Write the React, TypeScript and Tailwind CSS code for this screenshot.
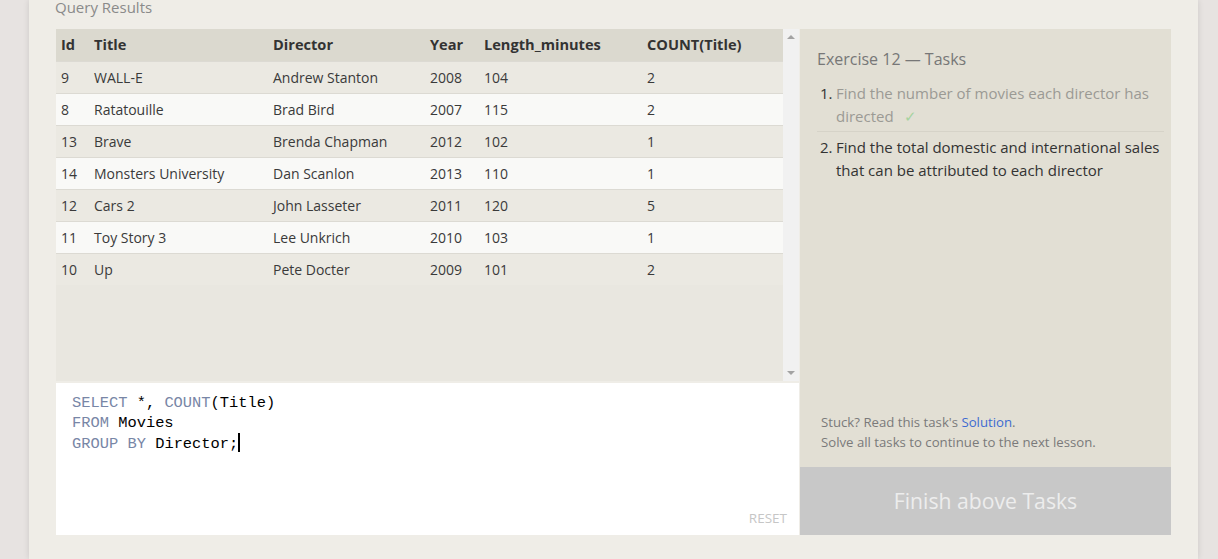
import React from 'react';

type Movie = {
  id: number;
  title: string;
  director: string;
  year: number;
  length: number;
  count: number;
};

const movies: Movie[] = [
  { id: 9, title: 'WALL-E', director: 'Andrew Stanton', year: 2008, length: 104, count: 2 },
  { id: 8, title: 'Ratatouille', director: 'Brad Bird', year: 2007, length: 115, count: 2 },
  { id: 13, title: 'Brave', director: 'Brenda Chapman', year: 2012, length: 102, count: 1 },
  { id: 14, title: 'Monsters University', director: 'Dan Scanlon', year: 2013, length: 110, count: 1 },
  { id: 12, title: 'Cars 2', director: 'John Lasseter', year: 2011, length: 120, count: 5 },
  { id: 11, title: 'Toy Story 3', director: 'Lee Unkrich', year: 2010, length: 103, count: 1 },
  { id: 10, title: 'Up', director: 'Pete Docter', year: 2009, length: 101, count: 2 },
];

const cols = 'grid grid-cols-[38px_179px_157px_54px_163px_1fr] items-center';

function ResultsTable() {
  return (
    <div className="flex h-[352px]">
      <div className="flex-1 bg-[#e9e7e0]">
        <div className={`${cols} h-[32px] bg-[#dbd9cf] font-bold text-[14.6px] text-[#333]`}>
          <div className="pl-[5px]">Id</div>
          <div>Title</div>
          <div>Director</div>
          <div>Year</div>
          <div>Length_minutes</div>
          <div>COUNT(Title)</div>
        </div>
        {movies.map((m, i) => (
          <div
            key={m.id}
            className={`${cols} h-[32px] border-t border-[#dcdad3] text-[14px] text-[#3a3a3a] ${
              i % 2 === 0 ? 'bg-[#ebe9e2]' : 'bg-[#f9f9f7]'
            }`}
          >
            <div className="pl-[5px]">{m.id}</div>
            <div>{m.title}</div>
            <div>{m.director}</div>
            <div>{m.year}</div>
            <div>{m.length}</div>
            <div>{m.count}</div>
          </div>
        ))}
      </div>
      {/* scrollbar */}
      <div className="w-[16px] bg-[#f1f1f1] flex flex-col items-center justify-between py-[6px]">
        <div className="w-0 h-0 border-l-[4px] border-r-[4px] border-b-[4px] border-l-transparent border-r-transparent border-b-[#a3a3a3]" />
        <div className="w-0 h-0 border-l-[4px] border-r-[4px] border-t-[4px] border-l-transparent border-r-transparent border-t-[#a3a3a3]" />
      </div>
    </div>
  );
}

function Editor() {
  const kw = 'text-[#7886a6]';
  return (
    <div className="mt-[2px] h-[152px] bg-white flex flex-col pl-[16px] pr-[12px] pt-[10px] pb-[9px]">
      <pre className="font-['Liberation_Mono',monospace] text-[15.4px] leading-[20px] text-black m-0">
        <span className={kw}>SELECT</span> *, <span className={kw}>COUNT</span>(Title){'\n'}
        <span className={kw}>FROM</span> Movies{'\n'}
        <span className={kw}>GROUP</span> <span className={kw}>BY</span> Director;
        <span className="inline-block w-[2px] h-[19px] bg-black align-[-4px]" />
      </pre>
      <div className="mt-auto text-right text-[13.5px] leading-[16px] text-[#c6c6c6] uppercase">Reset</div>
    </div>
  );
}

function TasksPanel() {
  return (
    <div className="w-[371px] h-[506px] bg-[#e2dfd4] flex flex-col">
      <div className="pl-[17px] pr-[7px] pt-[19px]">
        <div className="text-[16px] leading-[22px] text-[#777]">Exercise 12 — Tasks</div>
        <ol className="mt-[12px] text-[15px] leading-[23px]">
          <li className="flex pb-[3px] border-b border-[#d6d3c8]">
            <span className="w-[19px] shrink-0 pl-[3px] text-[#333]">1.</span>
            <span className="text-[#9b9a94]">
              Find the number of movies each director has directed{' '}
              <span className="ml-[6px] text-[#a6d3a0]">✓</span>
            </span>
          </li>
          <li className="flex pt-[4px]">
            <span className="w-[19px] shrink-0 pl-[3px] text-[#333]">2.</span>
            <span className="text-[#333]">
              Find the total domestic and international sales that can be attributed to each director
            </span>
          </li>
        </ol>
      </div>
      <div className="mt-auto pl-[21px] pb-[15px] text-[13.2px] leading-[20px] text-[#7a7a7a]">
        <div>
          Stuck? Read this task's <span className="text-[#3d6bd1]">Solution</span>.
        </div>
        <div>Solve all tasks to continue to the next lesson.</div>
      </div>
      <div className="h-[68px] bg-[#c8c8c8] flex items-center justify-center text-[21.2px] text-[#ededed]">
        Finish above Tasks
      </div>
    </div>
  );
}

export default function App() {
  return (
    <div className="w-full h-[559px] overflow-hidden flex bg-[#e7e3e1] font-['Open_Sans',sans-serif] text-[15px]">
      <div className="w-[29px] shrink-0" />
      <div className="flex-1 bg-[#efede7] shadow-[0_0_6px_rgba(0,0,0,0.12)] pl-[26px] pr-[27px]">
        <div className="h-[29px] text-[15px] leading-[20px] text-[#8a8a8a] -mt-[3px]">Query Results</div>
        <div className="flex gap-[1px] mt-[3px] pl-[1px]">
          <div className="w-[743px] flex flex-col">
            <ResultsTable />
            <Editor />
          </div>
          <TasksPanel />
        </div>
      </div>
      <div className="w-[20px] shrink-0" />
    </div>
  );
}
